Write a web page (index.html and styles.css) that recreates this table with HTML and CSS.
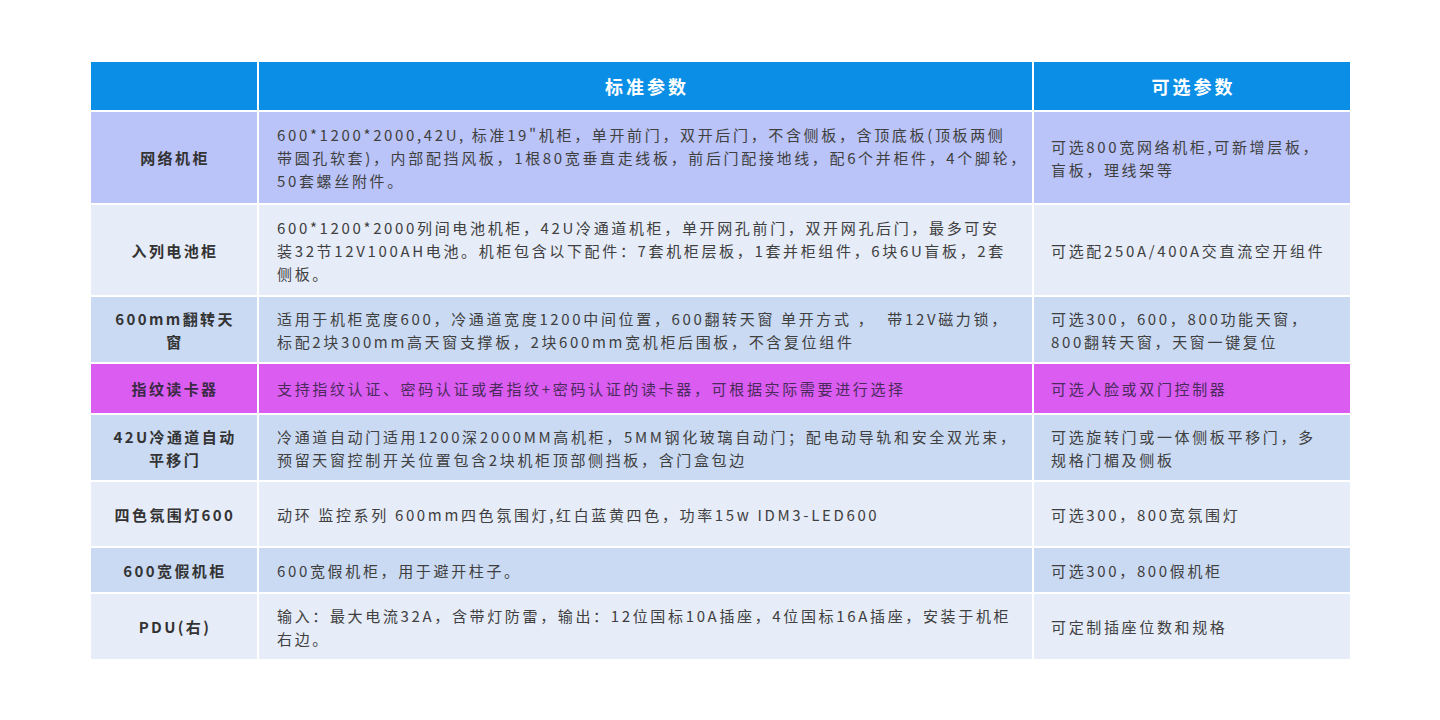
FILE: index.html
```html
<!DOCTYPE html>
<html lang="zh-CN">
<head>
<meta charset="utf-8">
<title>机柜参数</title>
<link rel="stylesheet" href="styles.css">
</head>
<body>
<div class="page">
  <div class="spec">
    <div class="cell head"></div>
    <div class="cell head">标准参数</div>
    <div class="cell head">可选参数</div>

    <div class="cell name lav">网络机柜</div>
    <div class="cell std lav">600*1200*2000,42U, 标准19"机柜，单开前门，双开后门，不含侧板，含顶底板(顶板两侧<br>带圆孔软套)，内部配挡风板，1根80宽垂直走线板，前后门配接地线，配6个并柜件，4个脚轮，<br>50套螺丝附件。</div>
    <div class="cell opt lav">可选800宽网络机柜,可新增层板，<br>盲板，理线架等</div>

    <div class="cell name pale">入列电池柜</div>
    <div class="cell std pale">600*1200*2000列间电池机柜，42U冷通道机柜，单开网孔前门，双开网孔后门，最多可安<br>装32节12V100AH电池。机柜包含以下配件：7套机柜层板，1套并柜组件，6块6U盲板，2套<br>侧板。</div>
    <div class="cell opt pale">可选配250A/400A交直流空开组件</div>

    <div class="cell name blue">600mm翻转天<br>窗</div>
    <div class="cell std blue">适用于机柜宽度600，冷通道宽度1200中间位置，600翻转天窗 单开方式 ，&nbsp; 带12V磁力锁，<br>标配2块300mm高天窗支撑板，2块600mm宽机柜后围板，不含复位组件</div>
    <div class="cell opt blue">可选300，600，800功能天窗，<br>800翻转天窗，天窗一键复位</div>

    <div class="cell name magenta">指纹读卡器</div>
    <div class="cell std magenta">支持指纹认证、密码认证或者指纹+密码认证的读卡器，可根据实际需要进行选择</div>
    <div class="cell opt magenta">可选人脸或双门控制器</div>

    <div class="cell name blue">42U冷通道自动<br>平移门</div>
    <div class="cell std blue">冷通道自动门适用1200深2000MM高机柜，5MM钢化玻璃自动门；配电动导轨和安全双光束，<br>预留天窗控制开关位置包含2块机柜顶部侧挡板，含门盒包边</div>
    <div class="cell opt blue">可选旋转门或一体侧板平移门，多<br>规格门楣及侧板</div>

    <div class="cell name pale">四色氛围灯600</div>
    <div class="cell std pale">动环 监控系列 600mm四色氛围灯,红白蓝黄四色，功率15w IDM3-LED600</div>
    <div class="cell opt pale">可选300，800宽氛围灯</div>

    <div class="cell name blue">600宽假机柜</div>
    <div class="cell std blue">600宽假机柜，用于避开柱子。</div>
    <div class="cell opt blue">可选300，800假机柜</div>

    <div class="cell name pale">PDU(右)</div>
    <div class="cell std pale">输入：最大电流32A，含带灯防雷，输出：12位国标10A插座，4位国标16A插座，安装于机柜<br>右边。</div>
    <div class="cell opt pale">可定制插座位数和规格</div>
  </div>
</div>
</body>
</html>
```

FILE: styles.css
```css
html, body {
  margin: 0;
  padding: 0;
  background: #ffffff;
}

.page {
  padding: 62px 0 0 91px;
}

.spec {
  display: grid;
  grid-template-columns: 166px 773px 316px;
  grid-template-rows: 48px 91px 90px 65px 49px 65px 64px 44px 65px;
  column-gap: 2px;
  row-gap: 2px;
  width: 1259px;
  font-family: "Noto Sans CJK SC", "Noto Sans", sans-serif;
  font-size: 15px;
  line-height: 23px;
  letter-spacing: 2.65px;
  color: #404040;
}

.cell {
  display: flex;
  align-items: center;
  box-sizing: border-box;
  white-space: nowrap;
}

.head {
  background: #0b8fe6;
  color: #ffffff;
  font-size: 18px;
  font-weight: 700;
  letter-spacing: 3px;
  justify-content: center;
  text-align: center;
  padding-left: 3px;
}

.name {
  justify-content: center;
  text-align: center;
  font-weight: 700;
  letter-spacing: 2.4px;
  color: #333333;
  padding-left: 2px;
}

.std {
  padding-left: 18px;
}

.opt {
  padding-left: 17px;
}

.lav {
  background: #bac4f9;
}

.pale {
  background: #e6ecf8;
}

.blue {
  background: #cadaf3;
}

.magenta {
  background: #da5cf1;
  color: #4a2b5c;
}

.magenta.name {
  color: #3a2a44;
}
```
